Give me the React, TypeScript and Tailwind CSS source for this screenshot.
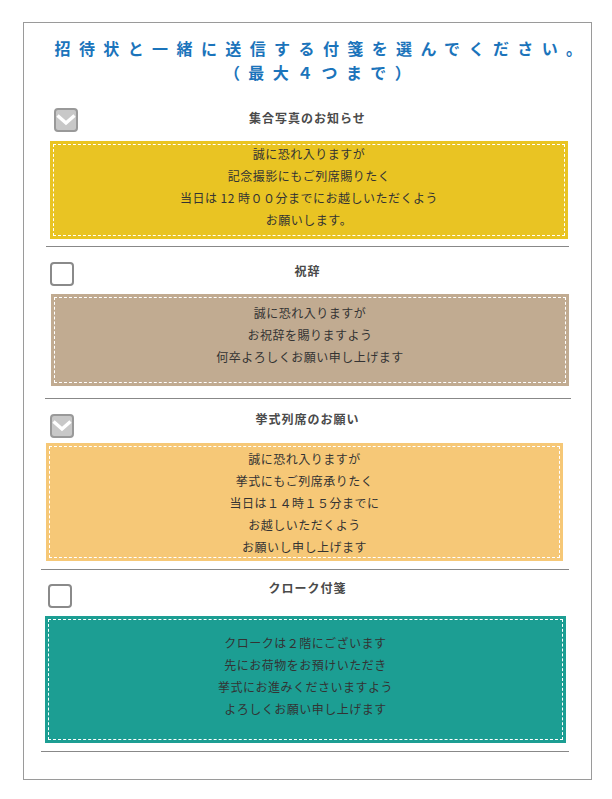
import { Fragment } from "react";

type Note = {
  title: string;
  checked: boolean;
  lines: string[];
  checkClass: string;
  titleClass: string;
  boxClass: string;
  textClass: string;
  ruleClass: string;
};

const notes: Note[] = [
  {
    title: "集合写真のお知らせ",
    checked: true,
    lines: ["誠に恐れ入りますが", "記念撮影にもご列席賜りたく", "当日は 12 時００分までにお越しいただくよう", "お願いします。"],
    checkClass: "mt-[24px] ml-[30px]",
    titleClass: "mt-[24px]",
    boxClass: "mt-[9px] ml-[26px] w-[518px] h-[98px] bg-[#e9c423]",
    textClass: "-mt-[2px]",
    ruleClass: "mt-[7px] ml-[22px] w-[523px]",
  },
  {
    title: "祝辞",
    checked: false,
    lines: ["誠に恐れ入りますが", "お祝辞を賜りますよう", "何卒よろしくお願い申し上げます"],
    checkClass: "mt-[15px] ml-[26px]",
    titleClass: "mt-[14px]",
    boxClass: "mt-[8px] ml-[27px] w-[518px] h-[92px] bg-[#c1ab91]",
    textClass: "pt-[4px]",
    ruleClass: "mt-[12px] ml-[21px] w-[526px]",
  },
  {
    title: "挙式列席のお願い",
    checked: true,
    lines: ["誠に恐れ入りますが", "挙式にもご列席承りたく", "当日は１４時１５分までに", "お越しいただくよう", "お願いし申し上げます"],
    checkClass: "mt-[15px] ml-[26px]",
    titleClass: "mt-[10px]",
    boxClass: "mt-[5px] ml-[22px] w-[517px] h-[118px] bg-[#f6c877]",
    textClass: "pt-[1px]",
    ruleClass: "mt-[8px] ml-[17px] w-[528px]",
  },
  {
    title: "クローク付箋",
    checked: false,
    lines: ["クロークは２階にございます", "先にお荷物をお預けいただき", "挙式にお進みくださいますよう", "よろしくお願い申し上げます"],
    checkClass: "mt-[14px] ml-[24px]",
    titleClass: "mt-[8px]",
    boxClass: "mt-[8px] ml-[21px] w-[521px] h-[127px] bg-[#1c9e93]",
    textClass: "pt-[12px]",
    ruleClass: "mt-[8px] ml-[17px] w-[528px]",
  },
];

function CheckBox({ checked, className }: { checked: boolean; className: string }) {
  return (
    <div
      className={[
        "col-start-1 row-start-1 flex h-[24px] w-[24px] items-center justify-center self-start justify-self-start rounded-[4px] border-2",
        checked ? "border-[#999] bg-[#c8c8c8]" : "border-[#8a8a8a] bg-white",
        className,
      ].join(" ")}
    >
      {checked ? (
        <svg width="20" height="20" viewBox="0 0 20 20" fill="none">
          <path d="M1.5 5.5 L10 13 L18.5 5.5" stroke="white" strokeWidth="3.4" strokeLinejoin="miter" />
        </svg>
      ) : null}
    </div>
  );
}

export default function App() {
  return (
    <div
      className="h-[799px] w-[612px] bg-white pl-[23px] pt-[22px]"
      style={{ fontFamily: '"Noto Sans CJK JP", "Noto Sans", sans-serif' }}
    >
      <div className="h-[758px] w-[569px] border border-[#9a9a9a]">
        <div className="pt-[13px] text-[16px] font-bold leading-[24px] tracking-[8.4px] text-[#1b74bb]">
          <div className="whitespace-nowrap pl-[30px] text-center">招待状と一緒に送信する付箋を選んでください。</div>
          <div className="whitespace-nowrap pl-[28px] text-center">（最大４つまで）</div>
        </div>

        {notes.map((note) => (
          <Fragment key={note.title}>
            <div className="grid">
              <CheckBox checked={note.checked} className={note.checkClass} />
              <div
                className={[
                  "col-start-1 row-start-1 self-start text-center text-[12px] font-bold leading-[20px] tracking-[1px] text-[#4a4a4a]",
                  note.titleClass,
                ].join(" ")}
              >
                {note.title}
              </div>
            </div>
            <div className={["p-[3px]", note.boxClass].join(" ")}>
              <div className="h-full border border-dashed border-white">
                <div className={["text-center text-[12px] leading-[22px] tracking-[0.5px] text-[#333]", note.textClass].join(" ")}>
                  {note.lines.map((line) => (
                    <div key={line}>{line}</div>
                  ))}
                </div>
              </div>
            </div>
            <div className={["h-px bg-[#888]", note.ruleClass].join(" ")} />
          </Fragment>
        ))}
      </div>
    </div>
  );
}
